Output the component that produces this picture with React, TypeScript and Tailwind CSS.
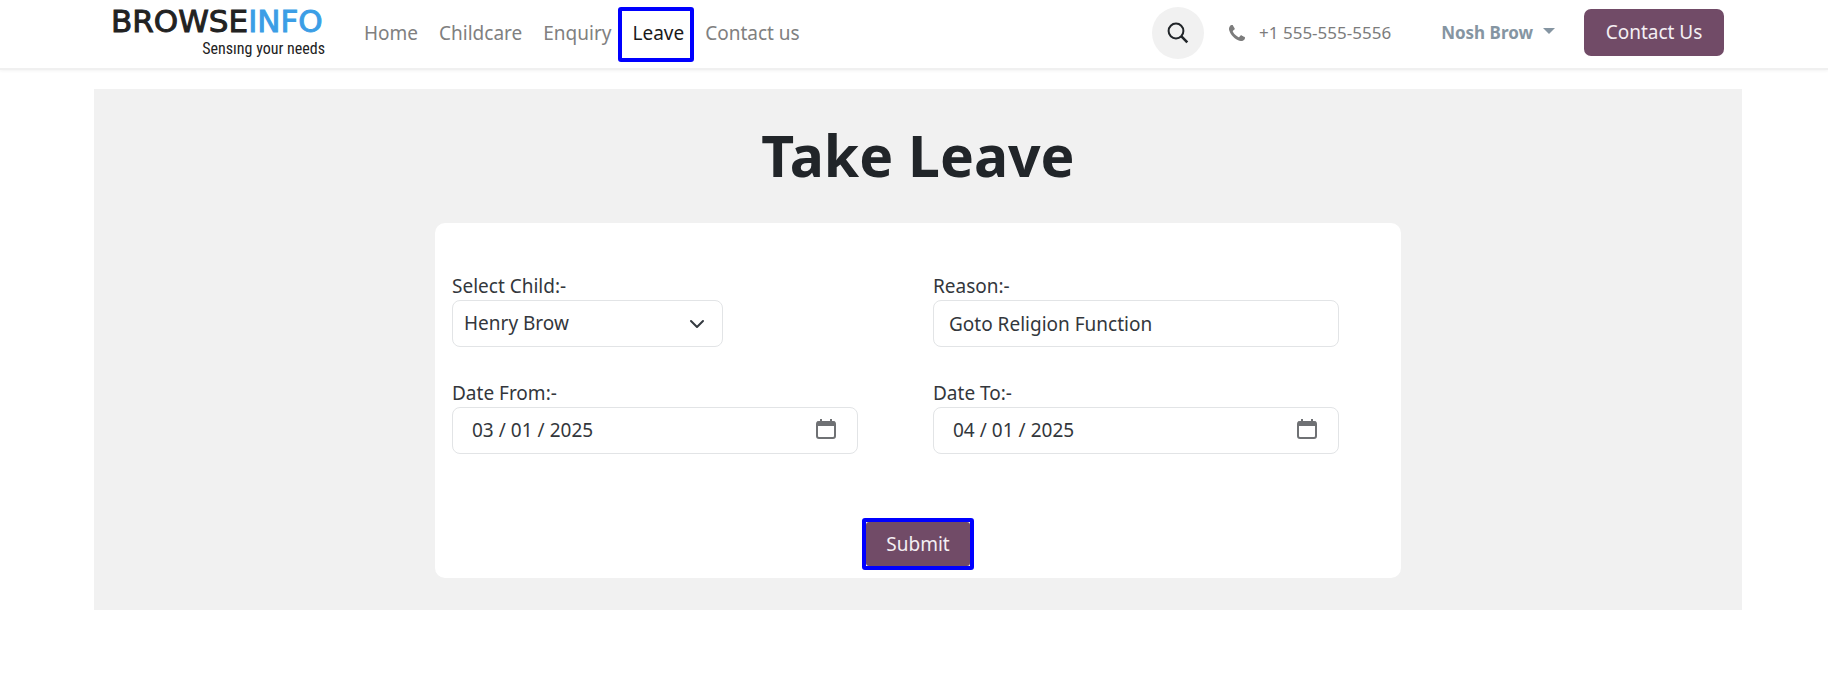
import React from "react";

const navLinks = [
  { label: "Home" },
  { label: "Childcare" },
  { label: "Enquiry" },
  { label: "Leave", active: true },
  { label: "Contact us" },
];

function Logo() {
  return (
    <a href="#" aria-label="BrowseInfo" className="flex w-[214px] shrink-0 flex-col">
      <span className="font-['DejaVu_Sans',sans-serif] text-[31px] leading-[32px] text-[#222222] [-webkit-text-stroke:1px]">
        BROWSE<span className="text-[#3b9ee6]">INFO</span>
      </span>
      <span className="self-end font-['Liberation_Sans_Narrow','Roboto_Condensed','DejaVu_Sans_Condensed',sans-serif] text-[16px] leading-[24px] text-[#222222]">
        Sensıng your needs
      </span>
    </a>
  );
}

function SearchIcon() {
  return (
    <svg width="22" height="22" viewBox="0 0 22 22" fill="none" stroke="#212529" strokeWidth="2" aria-hidden="true">
      <circle cx="9" cy="9" r="7.4" />
      <path d="M14.2 14.2L20.3 20.3" strokeWidth="2.6" />
    </svg>
  );
}

function PhoneIcon() {
  return (
    <svg width="16" height="16" viewBox="0 128 1408 1408" fill="currentColor" aria-hidden="true">
      <path d="M1408 1240q0 27-10 70.5t-21 68.5q-21 50-122 106-94 51-186 51-27 0-52.5-3.5t-57.5-12.5-47.5-14.5-55.5-20.5-49-18q-98-35-175-83-128-79-264.5-215.5t-215.5-264.5q-48-77-83-175-3-9-18-49t-20.5-55.5-14.5-47.5-12.5-57.5-3.5-52.5q0-92 51-186 56-101 106-122 25-11 68.5-21t70.5-10q14 0 21 3 18 6 53 76 11 19 30 54t35 63.5 31 53.5q3 4 17.5 25t21.5 35.5 7 28.5q0 20-28.5 50t-62 55-62 53-28.5 46q0 9 5 22.5t8.5 20.5 14 24 11.5 19q76 137 174 235t235 174q2 1 19 11.5t24 14 20.5 8.5 22.5 5q18 0 46-28.5t53-62 55-62 50-28.5q14 0 28.5 7t35.5 21.5 25 17.5q25 15 53.5 31t63.5 35 54 30q70 35 76 53 3 7 3 21z" />
    </svg>
  );
}

function CalendarIcon() {
  return (
    <svg
      width="20" height="20" viewBox="0 0 20 20" fill="none" stroke="#6f7174" strokeWidth="2" aria-hidden="true"
      className="pointer-events-none absolute top-[12px] right-[22px]"
    >
      <rect x="1" y="3" width="18" height="16" rx="2" />
      <path d="M1 2.5H19V7H1Z" fill="#6f7174" stroke="none" />
      <path d="M5 0V3M15 0V3" />
    </svg>
  );
}

function Header() {
  return (
    <header className="flex items-center border-b-2 border-[#f0f0f0] pr-[104px] pb-[2px] pl-[111px] shadow-[0_1px_3px_rgba(0,0,0,0.05)]">
      <Logo />
      <nav className="ml-[29px] flex h-[66px] items-center gap-px">
        {navLinks.map((link) => (
          <a
            key={link.label}
            href="#"
            aria-current={link.active ? "page" : undefined}
            className={
              link.active
                ? "relative px-[10px] text-[19px] whitespace-nowrap text-[#1a1a1a]"
                : "px-[10px] text-[19px] whitespace-nowrap text-[#808080]"
            }
          >
            {link.label}
            {link.active && (
              <span className="absolute -top-[12px] right-0 -bottom-[15px] -left-1 rounded-[3px] border-4 border-[#0000ff]" />
            )}
          </a>
        ))}
      </nav>
      <div className="ml-auto flex items-center">
        <button type="button" aria-label="Search" className="flex size-[52px] items-center justify-center rounded-full bg-[#f1f1f1]">
          <SearchIcon />
        </button>
        <a href="#" className="ml-[25px] flex items-center gap-[14px] text-[17px] whitespace-nowrap text-[#7c7c7c]">
          <PhoneIcon />
          +1 555-555-5556
        </a>
        <button type="button" className="ml-[50px] flex items-center gap-[10px] text-[17px] font-bold whitespace-nowrap text-[#8595a2]">
          Nosh Brow
          <svg width="12" height="6" viewBox="0 0 12 6" fill="currentColor" aria-hidden="true" className="mb-[5px]">
            <path d="M0 0H12L6 6Z" />
          </svg>
        </button>
        <a href="#" className="mb-[2px] ml-[29px] flex h-[47px] w-[140px] items-center justify-center rounded-[7px] bg-[#714b67] text-[19px] text-[#f4eff3]">
          Contact Us
        </a>
      </div>
    </header>
  );
}

const fieldBox = "h-[47px] rounded-[8px] border border-[#e2e4e6] bg-white text-[19px] text-[#33373c]";

function DateField({ id, label, value }: { id: string; label: string; value: string }) {
  return (
    <div className="flex flex-col px-[15px]">
      <label htmlFor={id} className="leading-[27px]">{label}</label>
      <div className="relative w-9/10">
        <input
          id={id}
          name={id}
          type="date"
          defaultValue={value}
          className={`${fieldBox} w-full pr-[20px] pl-[18px] [&::-webkit-calendar-picker-indicator]:opacity-0 [&::-webkit-datetime-edit-text]:px-1`}
        />
        <CalendarIcon />
      </div>
    </div>
  );
}

export default function App() {
  return (
    <div className="min-h-screen bg-white font-['Noto_Sans',sans-serif] text-[19px] text-[#33373c]">
      <Header />
      <main className="mt-[19px] mr-[86px] ml-[94px] bg-[#f1f1f1] pt-[28px] pb-8">
        <h1 className="text-center text-[57px] leading-[76px] font-bold text-[#212529]">Take Leave</h1>
        <form
          onSubmit={(e) => e.preventDefault()}
          className="mx-auto mt-[30px] max-w-[966px] rounded-[10px] bg-white px-[2px] pt-[50px] pb-2"
        >
          <div className="grid grid-cols-2 gap-y-[33px]">
            <div className="flex flex-col px-[15px]">
              <label htmlFor="child" className="leading-[27px]">Select Child:-</label>
              <div className="relative w-3/5">
                <select id="child" name="child" className={`${fieldBox} w-full appearance-none pr-10 pl-[11px]`}>
                  <option>Henry Brow</option>
                </select>
                <svg
                  width="16" height="10" viewBox="0 0 16 10" fill="none" stroke="#343a40" strokeWidth="2"
                  strokeLinecap="round" strokeLinejoin="round" aria-hidden="true"
                  className="pointer-events-none absolute top-[19px] right-[18px]"
                >
                  <path d="M2 2L8 8L14 2" />
                </svg>
              </div>
            </div>
            <div className="flex flex-col px-[15px]">
              <label htmlFor="reason" className="leading-[27px]">Reason:-</label>
              <input id="reason" name="reason" type="text" defaultValue="Goto Religion Function" className={`${fieldBox} w-9/10 px-[15px]`} />
            </div>
            <DateField id="date-from" label="Date From:-" value="2025-03-01" />
            <DateField id="date-to" label="Date To:-" value="2025-04-01" />
          </div>
          <div className="mt-16 flex justify-center">
            <div className="rounded-[3px] border-4 border-[#0000ff]">
              <button type="submit" className="block h-11 w-[104px] rounded-[3px] bg-[#714b67] text-[19px] text-[#f4eff3]">
                Submit
              </button>
            </div>
          </div>
        </form>
      </main>
    </div>
  );
}
